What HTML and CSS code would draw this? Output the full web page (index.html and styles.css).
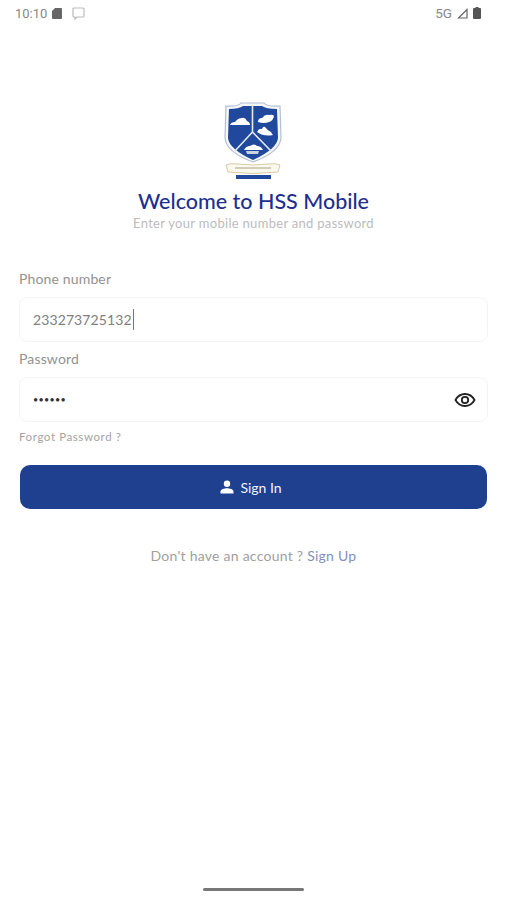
FILE: index.html
```html
<!DOCTYPE html>
<html lang="en">

<head>
    <meta charset="UTF-8">
    <meta name="viewport" content="width=device-width, initial-scale=1.0">
    <title>HSS Mobile</title>
    <link rel="stylesheet" href="styles.css">
</head>

<body>
    <div class="status-bar">
        <div class="status-left">
            <span class="clock">10:10</span>
            <svg width="10" height="12" viewBox="0 0 10 12"><path d="M3 1h6a1 1 0 0 1 1 1v9a1 1 0 0 1-1 1H1a1 1 0 0 1-1-1V4z" fill="#666" /></svg>
            <svg class="cast" width="13" height="13" viewBox="0 0 13 13"><path d="M2 1h9a1 1 0 0 1 1 1v7a1 1 0 0 1-1 1H5l-2 2v-2H2a1 1 0 0 1-1-1V2a1 1 0 0 1 1-1z" fill="none" stroke="#bbb" stroke-width="1.2" /></svg>
        </div>
        <div class="status-right">
            <span class="network">5G</span>
            <svg width="11" height="11" viewBox="0 0 11 11"><path d="M10 1.5V10H1.5z" fill="none" stroke="#666" stroke-width="1.2" /></svg>
            <svg width="8" height="12" viewBox="0 0 8 12"><path d="M2.5 0h3v1H7a1 1 0 0 1 1 1v9a1 1 0 0 1-1 1H1a1 1 0 0 1-1-1V2a1 1 0 0 1 1-1h1.500z" fill="#555" /></svg>
        </div>
    </div>

    <main class="login">
        <div class="brand">
            <!-- school crest -->
            <svg class="crest" width="60" height="78" viewBox="0 0 60 78">
                <path d="M2 4 Q14 5 17 1 L40 1 Q43 5 56 4 L57 36 Q56 50 29 60 Q2 50 1 36z" fill="#f4f6fa" stroke="#b4bfd4" stroke-width="1.200" />
                <path d="M5 7 Q15 7 19 4 L38 4 Q42 7 53 7 L54 36 Q53 47 29 58 Q5 47 4 36z" fill="#20489c" />
                <path d="M28.500 3V30M28.500 30L10 50M28.500 30L48 50" stroke="#e4e9f3" stroke-width="1.600" fill="none" />
                <path d="M6 23q1-3 5-3q3-4 7-4q3-1 5 3q3 1 3 4z" fill="#fff" />
                <path d="M34 20q0-4 4-4q3-4 7-3q4-1 5 1q-1 5-5 6q-5 2-11 0z" fill="#fff" />
                <path d="M33 30q2-4 5-3q1-3 3-2q2 3 6 5q1 2 2 3q-9 2-16-3z" fill="#fff" />
                <path d="M20 48q2-4 6-4q4-3 7 0q4 0 6 4z" fill="#fff" />
                <path d="M22 49h13l-1 3h-11z" fill="#c9d2e4" />
                <path d="M2 63 Q6 61 14 62 Q29 64 44 62 Q52 61 56 63 L54 70 Q29 73 4 70z" fill="#fbf8ee" stroke="#d8cba3" />
                <path d="M11 66h36" stroke="#a9a184" stroke-width="1.200" />
                <rect x="12" y="73" width="35" height="4" fill="#20489c" />
            </svg>
            <h1>Welcome to HSS Mobile</h1>
            <p class="subtitle">Enter your mobile number and password</p>
        </div>

        <form class="login-form">
            <label class="field-label">Phone number</label>
            <div class="field">
                <span class="field-value">233273725132</span><span class="caret"></span>
            </div>

            <label class="field-label">Password</label>
            <div class="field">
                <span class="dots">••••••</span>
                <svg class="eye" width="22" height="16" viewBox="0 0 22 16">
                    <path d="M1.500 8C4 3.500 7.500 2 11 2s7 1.500 9.500 6C18 12.500 14.500 14 11 14S4 12.500 1.500 8z" fill="none" stroke="#222" stroke-width="1.800" />
                    <circle cx="11" cy="8" r="3.200" fill="none" stroke="#222" stroke-width="1.800" />
                </svg>
            </div>

            <a class="forgot" href="#">Forgot Password ?</a>

            <button class="sign-in" type="button">
                <svg width="14" height="14" viewBox="0 0 14 14"><circle cx="7" cy="3.800" r="3.200" fill="#fff" /><path d="M0.500 13.500V11.500C0.500 9.300 4.500 8.300 7 8.300s6.500 1 6.500 3.200v2z" fill="#fff" /></svg>
                Sign In
            </button>
        </form>

        <p class="signup">Don't have an account ? <a href="#">Sign Up</a></p>
    </main>

    <div class="home-bar"></div>
</body>

</html>
```

FILE: styles.css
```css
/* Reset default */
body,
h1,
p,
button {
    margin: 0;
    padding: 0;
    box-sizing: border-box;
    font-family: "Lato", "Open Sans", sans-serif;
}

/* Page styling */
html,
body {
    height: 900px;
    overflow: hidden;
}

body {
    background-color: #fff;
    color: #888;
    display: flex;
    flex-direction: column;
}

/* Status bar */
.status-bar {
    height: 26px;
    padding: 0 25px 2px 15px;
    display: flex;
    align-items: center;
    justify-content: space-between;
    flex-shrink: 0;
}

.status-left,
.status-right {
    display: flex;
    align-items: center;
    gap: 5px;
}

.status-left .cast {
    margin-left: 5px;
}

.clock,
.network {
    font-family: "Roboto", sans-serif;
    font-size: 13px;
    color: #888;
}

.network {
    font-size: 13.5px;
}

/* Login content */
.login {
    padding: 74px 18px 0 19px;
    display: flex;
    flex-direction: column;
}

.brand {
    display: flex;
    flex-direction: column;
    align-items: center;
}

.crest {
    margin-bottom: 8px;
}

.brand h1 {
    font-size: 21.5px;
    line-height: 26px;
    font-weight: 500;
    color: #1f2f8f;
}

.subtitle {
    font-size: 13px;
    line-height: 18px;
    letter-spacing: 0.3px;
    color: #bcbcbc;
}

/* Form */
.login-form {
    margin-top: 38px;
    display: flex;
    flex-direction: column;
}

.field-label {
    font-size: 14px;
    line-height: 18px;
    letter-spacing: 0.15px;
    color: #929292;
    margin-bottom: 9px;
}

.field {
    box-sizing: border-box;
    height: 45px;
    padding: 0 11px 0 13px;
    margin-bottom: 8px;
    border: 1px solid #f4f4f4;
    border-radius: 8px;
    display: flex;
    align-items: center;
}

.field-value {
    font-size: 14px;
    letter-spacing: 0.1px;
    color: #808080;
}

.caret {
    width: 1px;
    height: 21px;
    background-color: #777;
    margin-left: 1px;
}

.dots {
    font-size: 9px;
    letter-spacing: 0.3px;
    color: #333;
}

.eye {
    margin-left: auto;
}

.forgot {
    font-size: 11.5px;
    line-height: 16px;
    letter-spacing: 0.6px;
    color: #a3a3a3;
    text-decoration: none;
    margin-top: -1px;
}

.sign-in {
    margin: 20px 1px 0;
    height: 44px;
    padding-right: 5px;
    border: none;
    border-radius: 10px;
    background-color: #1f3f8f;
    color: #f2f4fa;
    font-size: 14px;
    display: flex;
    align-items: center;
    justify-content: center;
    gap: 6px;
}

.signup {
    margin-top: 38px;
    text-align: center;
    font-size: 14px;
    line-height: 18px;
    letter-spacing: 0.25px;
    color: #a0a0a0;
}

.signup a {
    color: #868fba;
    text-decoration: none;
}

/* Gesture bar */
.home-bar {
    width: 101px;
    height: 3px;
    margin: auto auto 9px;
    background-color: #777;
    border-radius: 2px;
    flex-shrink: 0;
}
```
